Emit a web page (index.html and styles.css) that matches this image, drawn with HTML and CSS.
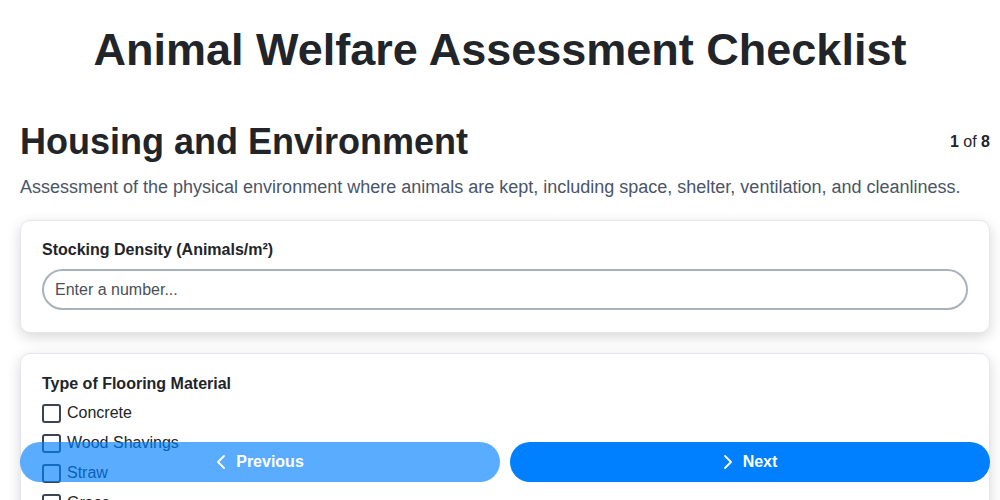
FILE: index.html
```html
<!DOCTYPE html>
<html lang="en">
<head>
<meta charset="utf-8">
<title>Animal Welfare Assessment Checklist</title>
<link rel="stylesheet" href="styles.css">
</head>
<body>
<main class="page">
  <h1 class="title">Animal Welfare Assessment Checklist</h1>
  <section class="section">
    <div class="section-head">
      <h2 class="section-title">Housing and Environment</h2>
      <div class="progress"><b>1</b> of <b>8</b></div>
    </div>
    <p class="section-desc">Assessment of the physical environment where animals are kept, including space, shelter, ventilation, and cleanliness.</p>
    <div class="card">
      <label class="field-label" for="density">Stocking Density (Animals/m²)</label>
      <input class="text-input" id="density" type="text" placeholder="Enter a number...">
    </div>
    <div class="card">
      <div class="field-label field-label-tight">Type of Flooring Material</div>
      <div class="options">
        <label class="option"><span class="box"></span>Concrete</label>
        <label class="option"><span class="box"></span>Wood Shavings</label>
        <label class="option"><span class="box"></span>Straw</label>
        <label class="option"><span class="box"></span>Grass</label>
        <label class="option"><span class="box"></span>Rubber Mats</label>
      </div>
    </div>
  </section>
</main>
<nav class="footer">
  <button class="btn btn-prev" disabled>
    <svg class="chev" viewBox="0 0 10 16" width="10" height="16"><path d="M8 2 L2 8 L8 14" fill="none" stroke="currentColor" stroke-width="1.8" stroke-linecap="round" stroke-linejoin="round"/></svg>
    Previous
  </button>
  <button class="btn btn-next">
    <svg class="chev" viewBox="0 0 10 16" width="10" height="16"><path d="M2 2 L8 8 L2 14" fill="none" stroke="currentColor" stroke-width="1.8" stroke-linecap="round" stroke-linejoin="round"/></svg>
    Next
  </button>
</nav>
</body>
</html>
```
FILE: styles.css
```css
* { box-sizing: border-box; }
html, body { margin: 0; padding: 0; background: #fff; }
body {
  font-family: "Liberation Sans", Arial, sans-serif;
  color: #212529;
}
.page { padding: 0 20px 80px 20px; }
.title {
  margin: 0;
  padding-top: 24px;
  font-size: 45px;
  line-height: 52px;
  text-align: center;
  font-weight: 700;
  color: #212529;
}
.section { margin-top: 44px; margin-right: -10px; }
.section-head {
  display: flex;
  justify-content: space-between;
  align-items: center;
}
.section-title {
  margin: 0;
  font-size: 36px;
  line-height: 44px;
  font-weight: 700;
  color: #212529;
}
.progress { font-size: 16px; color: #212529; }
.progress b { font-weight: 700; }
.section-desc {
  margin: 11px 0 21px;
  font-size: 18px;
  line-height: 24px;
  color: #4a5568;
}
.card {
  background: #fff;
  border: 1px solid #e6e6ee;
  border-radius: 10px;
  box-shadow: 0 4px 14px rgba(0,0,0,0.16);
  padding: 19px 21px 22px;
  margin-bottom: 20px;
}
.field-label {
  display: block;
  font-size: 16px;
  font-weight: 700;
  line-height: 20px;
  margin-bottom: 9px;
  color: #212529;
}
.field-label-tight { margin-top: 1px; margin-bottom: 4px; }
.text-input {
  display: block;
  width: 100%;
  height: 41px;
  border: 2px solid #a9b1b9;
  border-radius: 21px;
  padding: 0 11px;
  font-family: inherit;
  font-size: 16px;
  color: #212529;
  background: #fff;
  outline: none;
}
.text-input::placeholder { color: #4a5058; }
.options { display: flex; flex-direction: column; }
.option {
  display: flex;
  align-items: center;
  gap: 6px;
  height: 30px;
  font-size: 16px;
  color: #212529;
}
.box {
  width: 19px;
  height: 19px;
  border: 2px solid #3c4352;
  border-radius: 3px;
  flex: none;
}
.footer {
  position: fixed;
  left: 20px;
  right: 10px;
  bottom: 18px;
  display: flex;
  gap: 10px;
}
.btn {
  flex: 1;
  height: 40px;
  border: none;
  border-radius: 20px;
  background: #0080ff;
  color: #fff;
  font-family: "Liberation Sans", Arial, sans-serif;
  font-size: 16px;
  font-weight: 700;
  display: flex;
  align-items: center;
  justify-content: center;
  gap: 10px;
}
.btn-prev { opacity: 0.65; }
.chev { display: block; }
```
